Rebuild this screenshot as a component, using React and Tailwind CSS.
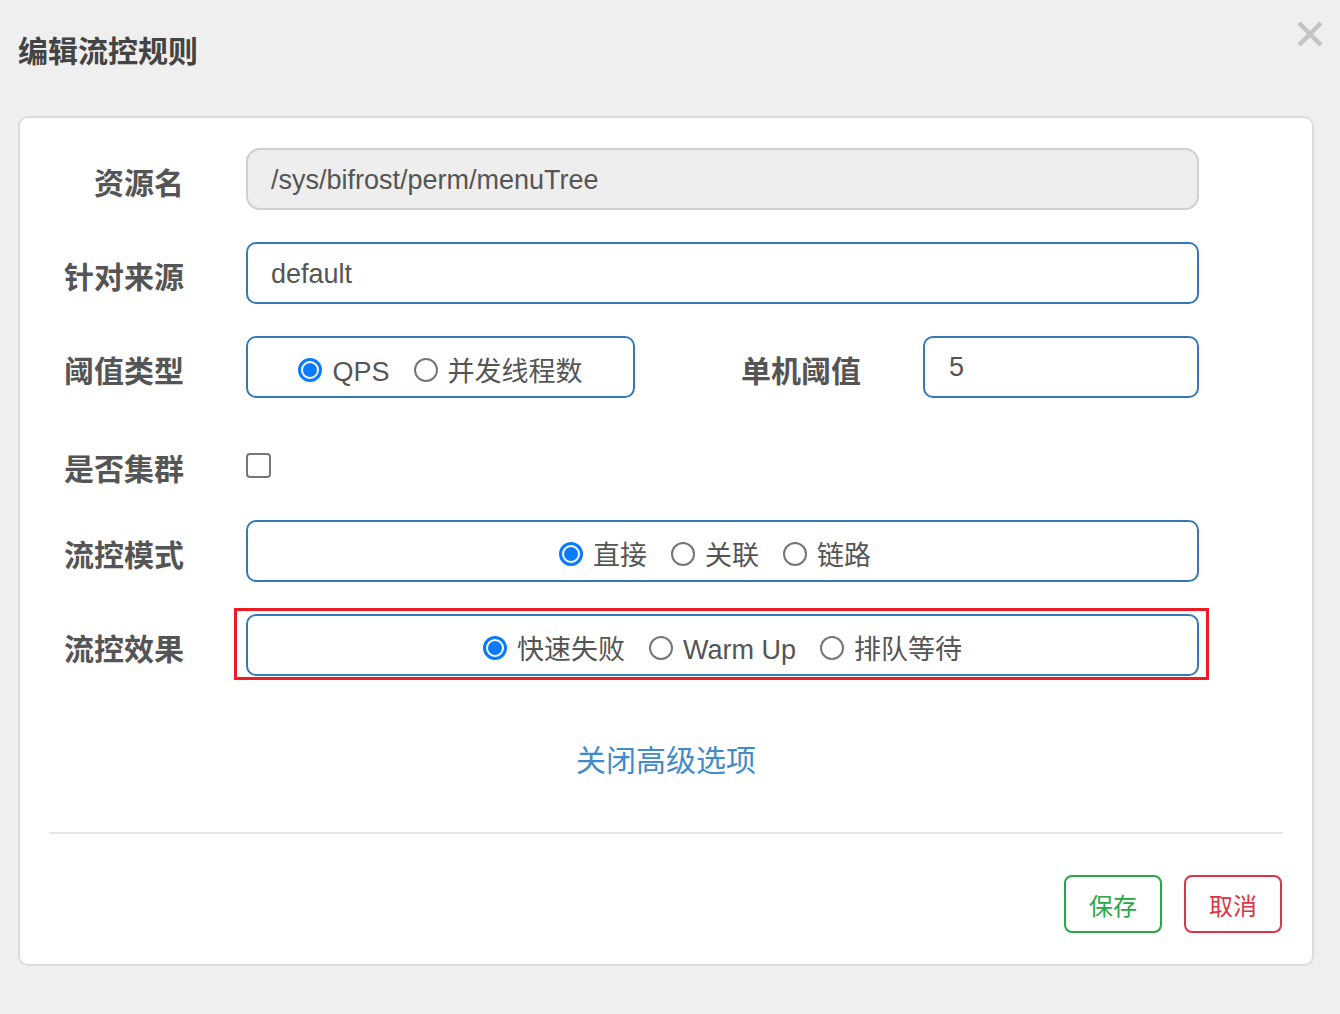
const FONT = { fontFamily: '"Liberation Sans", "Noto Sans CJK SC", sans-serif' };

const Radio = ({ checked }) =>
  checked ? (
    <span className="flex h-[24px] w-[24px] shrink-0 items-center justify-center rounded-full border-[3px] border-[#0a7aff] bg-white">
      <span className="h-[14px] w-[14px] rounded-full bg-[#0a7aff]" />
    </span>
  ) : (
    <span className="h-[24px] w-[24px] shrink-0 rounded-full border-2 border-[#767676] bg-white" />
  );

const RadioGroup = ({ items, extra = "" }) => (
  <div className={`flex items-center justify-center gap-[24px] pt-[5px] ${extra}`}>
    {items.map((it) => (
      <label key={it.label} className="flex items-center gap-[10px]">
        <Radio checked={it.checked} />
        <span className="text-[27px] leading-none text-[#555] pt-[6px]">{it.label}</span>
      </label>
    ))}
  </div>
);

const Label = ({ children, className = "" }) => (
  <div className={`w-[164px] shrink-0 text-right text-[30px] font-bold leading-none text-[#555] pt-[9px] ${className}`}>
    {children}
  </div>
);

const boxCls =
  "h-[62px] rounded-[10px] border-2 border-[#337ab7] bg-white flex items-center";

export default function App() {
  return (
    <div className="min-h-[1014px] w-[1340px] bg-[#efefef]" style={FONT}>
      <div className="flex h-[104px] items-center justify-between pl-[18px] pr-[17px]">
        <h1 className="text-[30px] font-bold leading-none text-[#444]">编辑流控规则</h1>
        <svg width="26" height="26" viewBox="0 0 26 26" className="-mt-[36px]">
          <path d="M2 2 L24 24 M24 2 L2 24" stroke="#c4c4c4" strokeWidth="4.5" />
        </svg>
      </div>

      <div className="ml-[18px] mt-[12px] h-[850px] w-[1296px] rounded-[10px] border-2 border-[#dcdcdc] bg-white pt-[30px]">
        <div className="flex flex-col gap-[32px]">
          <div className="flex items-center gap-[62px]">
            <Label>资源名</Label>
            <div className="flex h-[62px] w-[953px] items-center rounded-[14px] border-2 border-[#cfcfcf] bg-[#eee] px-[23px] pt-[3px] text-[27px] text-[#555]">
              /sys/bifrost/perm/menuTree
            </div>
          </div>

          <div className="flex items-center gap-[62px]">
            <Label>针对来源</Label>
            <div className={`${boxCls} w-[953px] px-[23px] pt-[2px] text-[27px] text-[#555]`}>default</div>
          </div>

          <div className="flex items-center gap-[62px]">
            <Label>阈值类型</Label>
            <div className={`${boxCls} w-[389px] justify-center`}>
              <RadioGroup
                items={[
                  { label: "QPS", checked: true },
                  { label: "并发线程数", checked: false },
                ]}
              />
            </div>
            <div className="w-[164px] pt-[9px] text-right text-[30px] font-bold leading-none text-[#555]">
              单机阈值
            </div>
            <div className={`${boxCls} w-[276px] px-[24px] text-[27px] text-[#555]`}>5</div>
          </div>

          <div className="flex h-[58px] items-center gap-[62px] pt-[12px]">
            <Label>是否集群</Label>
            <span className="h-[25px] w-[25px] rounded-[4px] border-2 border-[#767676] bg-white" />
          </div>

          <div className="flex items-center gap-[62px]">
            <Label>流控模式</Label>
            <div className={`${boxCls} w-[953px] justify-center`}>
              <RadioGroup
                extra="pr-[15px]"
                items={[
                  { label: "直接", checked: true },
                  { label: "关联", checked: false },
                  { label: "链路", checked: false },
                ]}
              />
            </div>
          </div>

          <div className="flex items-center gap-[62px]">
            <Label>流控效果</Label>
            <div className="relative">
              <div className={`${boxCls} w-[953px] justify-center`}>
                <RadioGroup
                  items={[
                    { label: "快速失败", checked: true },
                    { label: "Warm Up", checked: false },
                    { label: "排队等待", checked: false },
                  ]}
                />
              </div>
              <div className="pointer-events-none absolute -bottom-[4px] -left-[12px] -right-[10px] -top-[6px] border-[3px] border-[#ec1c24]" />
            </div>
          </div>
        </div>

        <div className="mt-[67px] text-center text-[30px] leading-[36px] text-[#428bca]">关闭高级选项</div>

        <div className="mx-[29px] mt-[53px] h-[2px] bg-[#e5e5e5]" />

        <div className="mr-[30px] mt-[41px] flex justify-end gap-[22px]">
          <button className="h-[58px] w-[98px] rounded-[8px] border-2 border-[#28a745] bg-white pt-[6px] text-[24px] text-[#28a745]">
            保存
          </button>
          <button className="h-[58px] w-[98px] rounded-[8px] border-2 border-[#dc3545] bg-white pt-[6px] text-[24px] text-[#dc3545]">
            取消
          </button>
        </div>
      </div>
    </div>
  );
}
